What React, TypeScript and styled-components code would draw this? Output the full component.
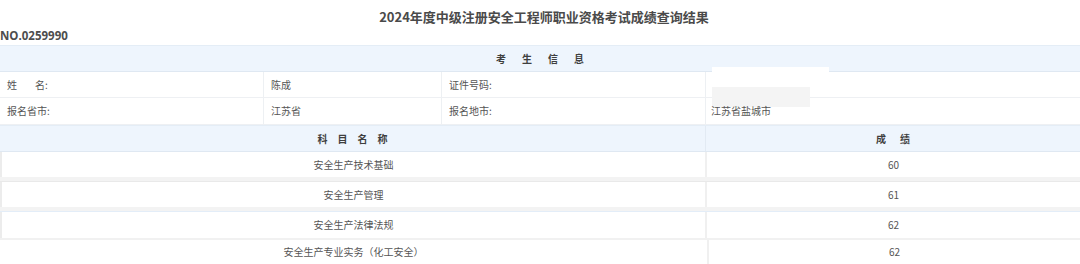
import React from "react";
import styled, { createGlobalStyle } from "styled-components";

const Global = createGlobalStyle`
  html, body { margin: 0; padding: 0; background: #ffffff; }
  body {
    width: 1080px;
    height: 264px;
    overflow: hidden;
    font-family: "Noto Sans CJK SC", "Noto Sans", "Liberation Sans", sans-serif;
    color: #555555;
  }
`;

const Page = styled.div`
  width: 1080px;
  display: flex;
  flex-direction: column;
`;

const Title = styled.h1`
  margin: 0;
  padding-top: 4px;
  height: 26px;
  line-height: 26px;
  text-align: center;
  font-size: 13px;
  font-weight: 700;
  color: #4a4a4a;
  padding-left: 8px;
`;

const SerialNo = styled.div`
  height: 15px;
  line-height: 12px;
  font-size: 11.5px;
  font-weight: 700;
  color: #4d4d4d;
  font-family: "Open Sans", "Noto Sans", sans-serif;
`;

const Band = styled.div<{ $cols: string }>`
  display: grid;
  grid-template-columns: ${(p) => p.$cols};
  background: #eef5fd;
  border-top: 1px solid #e4edf6;
  border-bottom: 1px solid #dfe8f2;
`;

const BandCell = styled.div<{ $spacing: number; $h: number }>`
  height: ${(p) => p.$h}px;
  line-height: ${(p) => p.$h}px;
  text-align: center;
  font-size: 10px;
  font-weight: 700;
  color: #3f3f3f;
  letter-spacing: ${(p) => p.$spacing}px;
  text-indent: ${(p) => p.$spacing}px;
  & + & {
    border-left: 1px solid #e2eaf3;
  }
`;

const InfoGrid = styled.div`
  display: grid;
  grid-template-columns: 264px 178px 264px 1fr;
`;

const InfoCell = styled.div<{ $h: number }>`
  position: relative;
  height: ${(p) => p.$h}px;
  line-height: ${(p) => p.$h}px;
  padding-left: 7px;
  font-size: 10px;
  color: #555555;
  border-bottom: 1px solid #eef0f3;
  border-right: 1px solid #edf0f3;
  white-space: pre;
  &:nth-child(4n) { border-right: none; padding-left: 5px; }
`;

const Mask = styled.div<{ $tone: string; $left: number; $top: number; $w: number; $h: number }>`
  position: absolute;
  left: ${(p) => p.$left}px;
  top: ${(p) => p.$top}px;
  width: ${(p) => p.$w}px;
  height: ${(p) => p.$h}px;
  background: ${(p) => p.$tone};
`;

const ScoreRow = styled.div<{ $split: number; $edge: boolean; $h: number }>`
  display: grid;
  grid-template-columns: ${(p) => p.$split}px 1fr;
  height: ${(p) => p.$h}px;
  border-left: ${(p) => (p.$edge ? "2px solid #ececec" : "none")};
`;

const ScoreCell = styled.div<{ $h: number }>`
  height: ${(p) => p.$h}px;
  line-height: ${(p) => p.$h}px;
  text-align: center;
  font-size: 10px;
  color: #555555;
  & + & {
    border-left: 2px solid #f0f0f0;
  }
`;

const Gap = styled.div<{ $h: number; $tone: string; $line?: string }>`
  height: ${(p) => p.$h}px;
  background: ${(p) => p.$tone};
  border-bottom: ${(p) => (p.$line ? `1px solid ${p.$line}` : "none")};
`;

type Score = { name: string; score: string };

const scores: Score[] = [
  { name: "安全生产技术基础", score: "60" },
  { name: "安全生产管理", score: "61" },
  { name: "安全生产法律法规", score: "62" },
  { name: "安全生产专业实务（化工安全）", score: "62" },
];

export default function App() {
  return (
    <Page>
      <Global />
      <Title>2024年度中级注册安全工程师职业资格考试成绩查询结果</Title>
      <SerialNo>NO.0259990</SerialNo>

      <Band $cols="1fr">
        <BandCell $spacing={16} $h={25}>考生信息</BandCell>
      </Band>

      <InfoGrid>
        <InfoCell $h={25}>{"姓        名:"}</InfoCell>
        <InfoCell $h={25}>陈成</InfoCell>
        <InfoCell $h={25}>证件号码:</InfoCell>
        <InfoCell $h={25}>
          <Mask $tone="#ffffff" $left={6} $top={-5} $w={117} $h={20} />
          <Mask $tone="#f4f4f4" $left={6} $top={15} $w={98} $h={20} />
        </InfoCell>
        <InfoCell $h={26}>报名省市:</InfoCell>
        <InfoCell $h={26}>江苏省</InfoCell>
        <InfoCell $h={26}>报名地市:</InfoCell>
        <InfoCell $h={26}>江苏省盐城市</InfoCell>
      </InfoGrid>

      <Band $cols="705px 1fr">
        <BandCell $spacing={10} $h={25}>科目名称</BandCell>
        <BandCell $spacing={14} $h={25}>成绩</BandCell>
      </Band>

      <ScoreRow $split={703} $edge $h={25}>
        <ScoreCell $h={25}>{scores[0].name}</ScoreCell>
        <ScoreCell $h={25}>{scores[0].score}</ScoreCell>
      </ScoreRow>
      <Gap $h={4} $tone="#f3f3f3" $line="#e9e9e9" />
      <ScoreRow $split={703} $edge $h={25}>
        <ScoreCell $h={25}>{scores[1].name}</ScoreCell>
        <ScoreCell $h={25}>{scores[1].score}</ScoreCell>
      </ScoreRow>
      <Gap $h={4} $tone="#f3f3f3" $line="#e3edf8" />
      <ScoreRow $split={703} $edge $h={26}>
        <ScoreCell $h={26}>{scores[2].name}</ScoreCell>
        <ScoreCell $h={26}>{scores[2].score}</ScoreCell>
      </ScoreRow>
      <Gap $h={2} $tone="#f1f1f1" />
      <ScoreRow $split={707} $edge={false} $h={24}>
        <ScoreCell $h={24}>{scores[3].name}</ScoreCell>
        <ScoreCell $h={24}>{scores[3].score}</ScoreCell>
      </ScoreRow>
    </Page>
  );
}
